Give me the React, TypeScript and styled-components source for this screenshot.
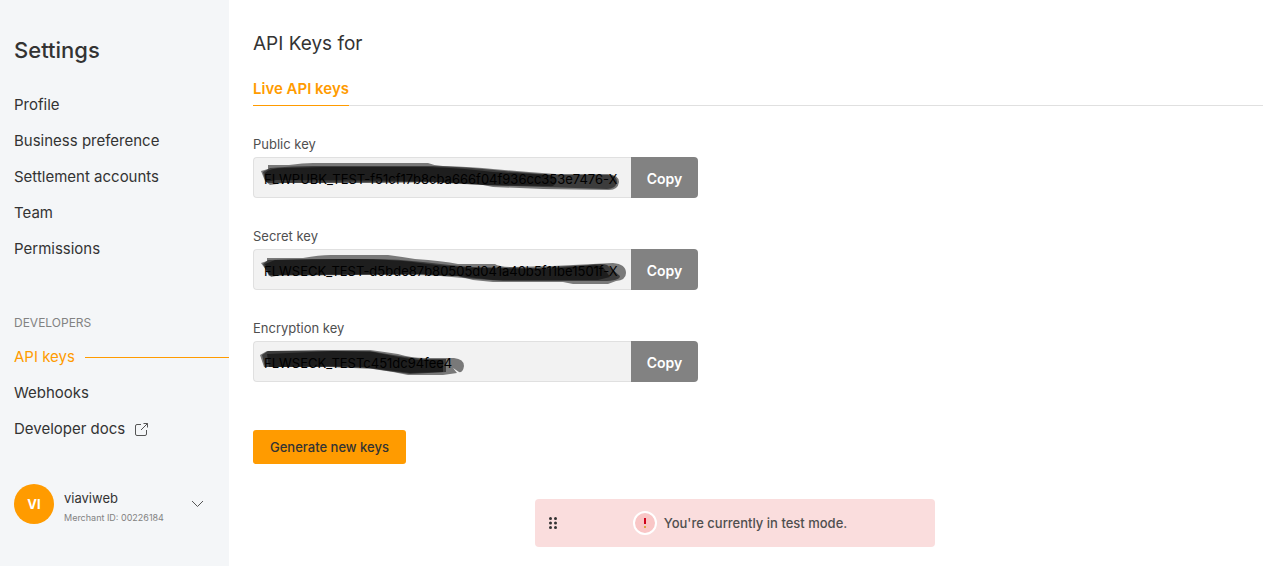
import React from "react";
import styled, { createGlobalStyle } from "styled-components";

const Global = createGlobalStyle`
  *, *::before, *::after { box-sizing: border-box; }
  body { margin: 0; background: #fff; color: #333; font-family: Inter, "Liberation Sans", sans-serif; }
  button, input { font-family: inherit; }
`;

const Page = styled.div`
  display: flex;
  min-height: 100vh;
`;

const Sidebar = styled.aside`
  flex: 0 0 229px;
  padding: 36px 0 0 14px;
  background: #f4f6f8;
`;

const Title = styled.h1`
  margin: 0 0 31px;
  font-size: 22px;
  line-height: 28px;
  font-weight: 500;
`;

const NavList = styled.ul`
  margin: 0;
  padding: 0;
  list-style: none;
  display: flex;
  flex-direction: column;
  gap: 16px;
`;

const NavItem = styled.li`
  display: flex;
  align-items: center;
`;

const NavLink = styled.a<{ $active?: boolean }>`
  display: flex;
  flex: 1;
  align-items: center;
  gap: 10px;
  font-size: 15px;
  line-height: 20px;
  text-decoration: none;
  white-space: nowrap;
  color: ${(p) => (p.$active ? "#ff9b00" : "#333")};
  &::after {
    content: ${(p) => (p.$active ? '""' : "none")};
    flex: 1;
    height: 1px;
    background: #ff9b00;
  }
`;

const SectionLabel = styled.h2`
  margin: 56px 0 16px;
  font-size: 12px;
  line-height: 16px;
  font-weight: 400;
  color: #828282;
`;

const Account = styled.button`
  display: flex;
  align-items: center;
  gap: 10px;
  width: 100%;
  height: 40px;
  margin-top: 45px;
  padding: 0 25px 0 0;
  border: 0;
  background: none;
  color: inherit;
  text-align: left;
`;

const Avatar = styled.span`
  display: grid;
  place-items: center;
  flex: 0 0 40px;
  height: 40px;
  border-radius: 50%;
  background: #ff9b00;
  color: #fff;
  font-size: 13px;
  font-weight: 700;
`;

const AccountText = styled.span`
  display: flex;
  flex: 1;
  flex-direction: column;
  align-self: flex-start;
  margin-top: 4px;
  font-size: 13px;
  line-height: 20px;
`;

const Merchant = styled.small`
  font-size: 9px;
  color: #828282;
  white-space: nowrap;
`;

const Main = styled.main`
  flex: 1;
  min-width: 0;
  padding: 32px 0 24px 24px;
`;

const Heading = styled.h2`
  margin: 0 0 24px;
  font-size: 19px;
  line-height: 24px;
  font-weight: 400;
`;

const Tabs = styled.div`
  display: flex;
  height: 26px;
  border-bottom: 1px solid #e0e0e0;
  margin-bottom: 28px;
`;

const Tab = styled.button`
  height: 26px;
  padding: 0 0 8px;
  border: 0;
  border-bottom: 1px solid #ff9b00;
  background: none;
  color: #ff9b00;
  font-size: 15px;
  line-height: 17px;
  font-weight: 600;
`;

const Keys = styled.div`
  display: flex;
  flex-direction: column;
  gap: 28px;
  max-width: 445px;
`;

const Label = styled.label`
  display: block;
  margin-bottom: 3px;
  font-size: 13px;
  line-height: 20px;
  color: #4f4f4f;
`;

const FieldRow = styled.div`
  position: relative;
  display: flex;
  height: 41px;
`;

const KeyInput = styled.input`
  flex: 1;
  min-width: 0;
  padding: 3px 10px 0;
  border: 1px solid #e0e0e0;
  border-right: 0;
  border-radius: 4px 0 0 4px;
  background: #f2f2f2;
  color: #000;
  font-size: 13px;
  outline: none;
`;

const CopyButton = styled.button`
  flex: 0 0 67px;
  padding: 1px 0 0;
  border: 0;
  border-radius: 0 4px 4px 0;
  background: #828282;
  color: #fff;
  font-size: 14px;
  font-weight: 600;
`;

const Marker = styled.svg`
  position: absolute;
  top: 0;
  left: 0;
  pointer-events: none;
  fill: #000;
`;

const Generate = styled.button`
  display: block;
  height: 34px;
  margin-top: 48px;
  padding: 0 17px;
  border: 0;
  border-radius: 3px;
  background: #ff9b00;
  color: #333;
  font-size: 13px;
  font-weight: 500;
`;

const Toast = styled.div`
  position: fixed;
  right: 328px;
  bottom: 19px;
  display: flex;
  align-items: center;
  width: 400px;
  height: 48px;
  padding: 0 12px 0 14px;
  border-radius: 4px;
  background: #fadddd;
`;

const ToastMessage = styled.div`
  display: flex;
  flex: 1;
  align-items: center;
  justify-content: center;
  gap: 7px;
  font-size: 13px;
  font-weight: 500;
  color: #4f4f4f;
`;

type Stroke = { d: string; o: number };

const keys: { id: string; label: string; value: string; strokes: Stroke[] }[] = [
  {
    id: "public",
    label: "Public key",
    value: "FLWPUBK_TEST-f51cf17b8cba666f04f936cc353e7476-X",
    strokes: [
      { o: 0.5, d: "M8 14L15 12V8H36Q50 6 60 6H175Q182 9 190 9Q220 10 240 12L276 15L302 17H355Q366 18 366 25Q365 33 356 33L290 32L240 30L225 27L185 25L120 26H30L17 28L12 24Z" },
      { o: 0.5, d: "M10 15L17 11Q40 9 60 9H180Q210 10 230 12Q270 16 302 18H355Q364 18 364 25Q363 32 354 32L290 30L230 28L170 25L15 26L12 23Z" },
      { o: 0.5, d: "M12 16Q16 11 32 11L70 10H175Q210 11 240 15L296 18Q304 19 303 25Q302 30 296 29L230 28L170 24L23 23L13 25Z" },
    ],
  },
  {
    id: "secret",
    label: "Secret key",
    value: "FLWSECK_TEST-d5bde87b80505d041a40b5f11be1501f-X",
    strokes: [
      { o: 0.5, d: "M8 14L14 12V9H50Q66 6 78 6H135Q150 8 162 10Q190 12 205 15H242Q246 18 260 18L300 17L360 14Q373 15 373 24Q373 31 363 32L355 35H320L310 33L240 33L220 31L205 27L160 26H28L18 28Z" },
      { o: 0.5, d: "M10 15L15 11L60 10H120Q145 10 170 13Q195 16 218 18L280 19L335 16Q350 14 354 16L367 27Q367 32 350 32L250 32L210 29L165 25L100 26L16 27Z" },
      { o: 0.5, d: "M12 15L22 11L95 10Q135 10 160 13Q195 18 225 19L290 20L334 17Q345 15 350 18L357 28L345 31L240 31L205 27L170 25H110L16 26Z" },
    ],
  },
  {
    id: "encryption",
    label: "Encryption key",
    value: "FLWSECK_TESTc451dc94fee4",
    strokes: [
      { o: 0.5, d: "M7 14L14 10L65 9H117Q132 11 145 13Q158 17 172 17H201Q211 18 211 25Q210 32 206 31L200 27L204 32L190 34H155L140 31L120 28L80 26H11Z" },
      { o: 0.5, d: "M9 14L15 10H117Q150 16 170 18H193V31L157 33L135 30L115 27L75 26H12Z" },
      { o: 0.5, d: "M14 13L80 10L120 11Q150 17 165 19H190V31L157 32L110 26L75 25L16 26Z" },
    ],
  },
];

const App: React.FC = () => (
  <Page>
    <Global />
    <Sidebar>
      <Title>Settings</Title>
      <nav>
        <NavList>
          {["Profile", "Business preference", "Settlement accounts", "Team", "Permissions"].map((t) => (
            <NavItem key={t}>
              <NavLink href="#">{t}</NavLink>
            </NavItem>
          ))}
        </NavList>
        <SectionLabel>DEVELOPERS</SectionLabel>
        <NavList>
          <NavItem>
            <NavLink href="#" $active>API keys</NavLink>
          </NavItem>
          <NavItem>
            <NavLink href="#">Webhooks</NavLink>
          </NavItem>
          <NavItem>
            <NavLink href="#">
              Developer docs
              <svg width="13" height="13" viewBox="0 0 13 13" fill="none" stroke="#555">
                <path d="M6 1.5H2Q.5 1.5 .5 3V11Q.5 12.500 2 12.500H10Q11.500 12.500 11.500 11V7M8.500 .5H12.500V4.500M12.500 .5L6 7" />
              </svg>
            </NavLink>
          </NavItem>
        </NavList>
      </nav>
      <Account type="button">
        <Avatar>VI</Avatar>
        <AccountText>
          viaviweb
          <Merchant>Merchant ID: 00226184</Merchant>
        </AccountText>
        <svg width="13" height="8" viewBox="0 0 13 8" fill="none" stroke="#555">
          <path d="M1 1L6.500 6.500L12 1" />
        </svg>
      </Account>
    </Sidebar>
    <Main>
      <Heading>API Keys for</Heading>
      <Tabs role="tablist">
        <Tab type="button" role="tab" aria-selected="true">Live API keys</Tab>
      </Tabs>
      <Keys>
        {keys.map((k) => (
          <div key={k.id}>
            <Label htmlFor={k.id}>{k.label}</Label>
            <FieldRow>
              <KeyInput id={k.id} readOnly value={k.value} />
              <CopyButton type="button">Copy</CopyButton>
              <Marker width="378" height="41" viewBox="0 0 378 41" aria-hidden="true">
                {k.strokes.map((s) => (
                  <path key={s.d} d={s.d} opacity={s.o} />
                ))}
              </Marker>
            </FieldRow>
          </div>
        ))}
      </Keys>
      <Generate type="button">Generate new keys</Generate>
    </Main>
    <Toast role="status">
      <svg width="8" height="12" viewBox="0 0 8 12" fill="#333">
        {[1.5, 6, 10.5].map((y) => (
          <React.Fragment key={y}>
            <circle cx="1.500" cy={y} r="1.500" />
            <circle cx="6.500" cy={y} r="1.500" />
          </React.Fragment>
        ))}
      </svg>
      <ToastMessage>
        <svg width="24" height="24" viewBox="0 0 24 24">
          <circle cx="12" cy="12" r="11" fill="#f9c6c6" stroke="#fff" strokeWidth="2" />
          <path d="M11 7H13V13H11Z" fill="#d0021b" />
          <path d="M11 15H13V17H11Z" fill="#d9a441" />
        </svg>
        You're currently in test mode.
      </ToastMessage>
    </Toast>
  </Page>
);

export default App;
